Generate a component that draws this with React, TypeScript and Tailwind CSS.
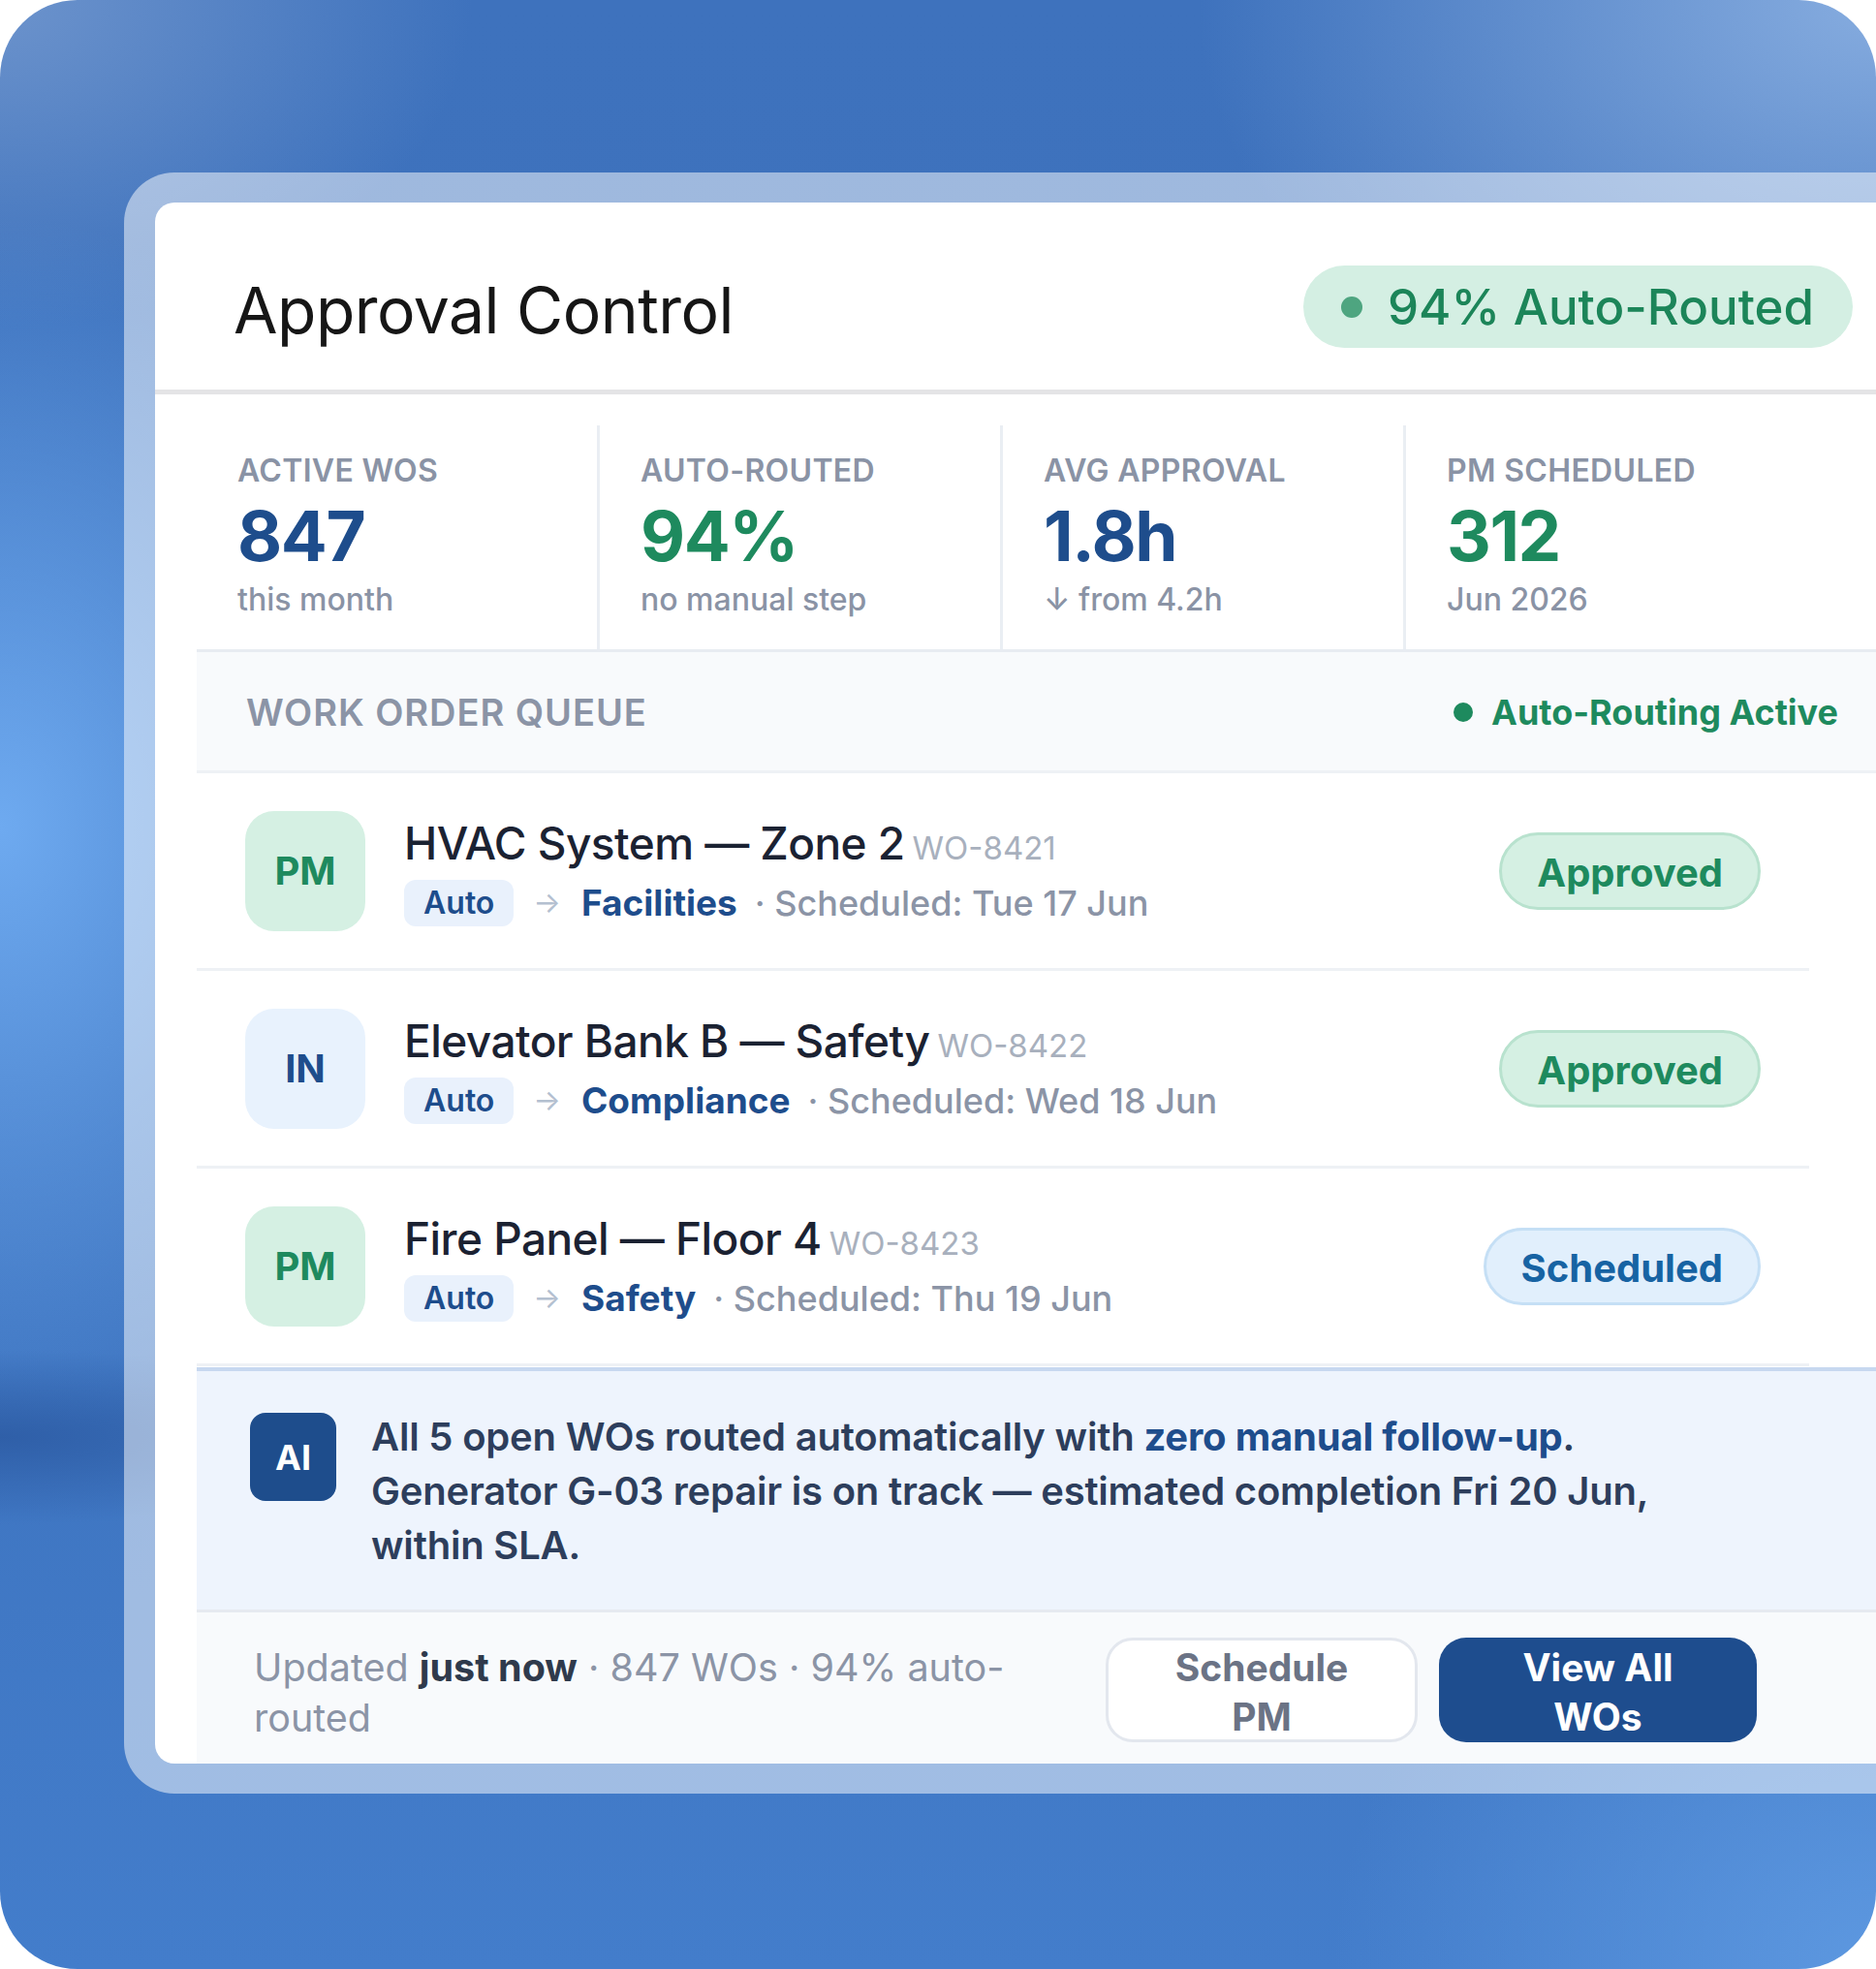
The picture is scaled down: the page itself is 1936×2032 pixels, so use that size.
import React from "react";

type Row = {
  tag: string;
  tagClass: string;
  title: string;
  wo: string;
  dept: string;
  date: string;
  status: "Approved" | "Scheduled";
};

const ROWS: Row[] = [
  {
    tag: "PM",
    tagClass: "bg-[#d5f0e3] text-[#1e8a5e]",
    title: "HVAC System — Zone 2",
    wo: "WO-8421",
    dept: "Facilities",
    date: "Tue 17 Jun",
    status: "Approved",
  },
  {
    tag: "IN",
    tagClass: "bg-[#e8f2fd] text-[#1e4d8c]",
    title: "Elevator Bank B — Safety",
    wo: "WO-8422",
    dept: "Compliance",
    date: "Wed 18 Jun",
    status: "Approved",
  },
  {
    tag: "PM",
    tagClass: "bg-[#d5f0e3] text-[#1e8a5e]",
    title: "Fire Panel — Floor 4",
    wo: "WO-8423",
    dept: "Safety",
    date: "Thu 19 Jun",
    status: "Scheduled",
  },
];

const STATS = [
  { label: "Active WOs", value: "847", sub: "this month", tone: "text-[#1e4d8c]" },
  { label: "Auto-Routed", value: "94%", sub: "no manual step", tone: "text-[#1e8a5e]" },
  { label: "Avg Approval", value: "1.8h", sub: "↓ from 4.2h", tone: "text-[#1e4d8c]" },
  { label: "PM Scheduled", value: "312", sub: "Jun 2026", tone: "text-[#1e8a5e]" },
];

function StatusPill({ status }: { status: Row["status"] }) {
  const tone =
    status === "Approved"
      ? "bg-[#d5f0e3] border-[#b8e2ce] text-[#1e8a5e]"
      : "bg-[#e1effc] border-[#c5dff5] text-[#1763a3]";
  return (
    <div className={`ml-auto flex h-[80px] items-center rounded-full border-[3px] px-[36px] pt-[4px] text-[40px] font-bold ${tone}`}>
      {status}
    </div>
  );
}

function QueueRow({ row }: { row: Row }) {
  return (
    <div className="flex h-[204px] items-center border-b-[3px] border-[#eef1f5] pl-[50px] pr-[50px]">
      <div className={`flex h-[124px] w-[124px] items-center justify-center rounded-[30px] text-[40px] font-bold ${row.tagClass}`}>
        {row.tag}
      </div>
      <div className="ml-[40px] pt-[4px]">
        <div className="flex items-baseline gap-[8px]">
          <span className="text-[46px] font-medium leading-[56px] tracking-[-0.012em] text-[#1b2232]">{row.title}</span>
          <span className="text-[33px] text-[#a8b0bd]">{row.wo}</span>
        </div>
        <div className="mt-[4px] flex items-center">
          <span className="flex h-[48px] items-center rounded-[12px] bg-[#e9f1fc] px-[20px] text-[32px] font-semibold text-[#1e4d8c]">
            Auto
          </span>
          <span className="ml-[20px] text-[30px] text-[#b4c0d0]">→</span>
          <span className="ml-[21px] text-[37px] font-bold text-[#1e4d8c]">{row.dept}</span>
          <span className="ml-[18px] text-[36px] font-medium text-[#8b94a6]">· Scheduled: {row.date}</span>
        </div>
      </div>
      <StatusPill status={row.status} />
    </div>
  );
}

export default function App() {
  return (
    <div className="min-h-screen bg-white font-['Inter',sans-serif]">
      <div className="h-[2032px] w-[1936px] overflow-hidden rounded-[80px] bg-[radial-gradient(ellipse_420px_90px_at_0%_73%,#2f5fa8_0%,transparent_100%),radial-gradient(ellipse_700px_900px_at_0%_42%,#6eaaf0_0%,transparent_70%),radial-gradient(ellipse_650px_450px_at_0%_0%,#6c93cc_0%,transparent_75%),radial-gradient(ellipse_1000px_700px_at_100%_0%,#86acdf_0%,transparent_70%),radial-gradient(ellipse_800px_700px_at_100%_100%,#5d98e0_0%,transparent_70%),linear-gradient(180deg,#3e72bd_0%,#3c71bc_55%,#437dcb_100%)] pl-[128px] pt-[178px]">
        <div className="w-[1900px] rounded-l-[52px] bg-white/50 py-[31px] pl-[32px]">
          <div className="w-[1838px] overflow-hidden rounded-l-[20px] bg-white">
            {/* header */}
            <div className="flex items-center justify-between border-b-[5px] border-[#e4e4e6] pb-[43px] pl-[81px] pr-[86px] pt-[65px]">
              <h1 className="mt-[6px] text-[66px] font-normal leading-none tracking-[-0.008em] text-[#161616]">
                Approval Control
              </h1>
              <div className="flex h-[85px] items-center gap-[26px] rounded-full bg-[#d4efe3] pl-[39px] pr-[40px]">
                <span className="h-[22px] w-[22px] rounded-full bg-[#4ea580]" />
                <span className="text-[51px] font-medium leading-none text-[#1c8559]">94% Auto-Routed</span>
              </div>
            </div>

            <div className="ml-[43px]">
              {/* stats */}
              <div className="border-b-[3px] border-[#e8ecf2] pt-[32px]">
                <div className="grid grid-cols-[repeat(4,416px)]">
                  {STATS.map((s, i) => (
                    <div
                      key={s.label}
                      className={`pb-[32px] pl-[42px] pt-[28px] ${i < 3 ? "border-r-[3px] border-[#eaeef3]" : ""}`}
                    >
                      <div className="text-[32px] font-semibold uppercase leading-[38px] tracking-[0.01em] text-[#8a93a5]">
                        {s.label}
                      </div>
                      <div className={`mt-[13px] text-[71px] font-bold leading-none tracking-[-0.02em] ${s.tone}`}>
                        {s.value}
                      </div>
                      <div className="mt-[11px] text-[32px] font-medium leading-[38px] text-[#8a93a5]">{s.sub}</div>
                    </div>
                  ))}
                </div>
              </div>

              {/* queue header */}
              <div className="flex h-[125px] items-center justify-between border-b-[3px] border-[#eef1f5] bg-[#f8fafc] pl-[51px] pr-[101px] pt-[2px]">
                <span className="text-[38px] font-semibold tracking-[0.025em] text-[#8b94a6]">WORK ORDER QUEUE</span>
                <span className="flex items-center gap-[19px]">
                  <span className="h-[20px] w-[20px] rounded-full bg-[#1e8a5e]" />
                  <span className="text-[36px] font-bold text-[#1e8a5e]">Auto-Routing Active</span>
                </span>
              </div>

              {/* rows */}
              <div className="w-[1664px]">
                {ROWS.map((r) => (
                  <QueueRow key={r.wo} row={r} />
                ))}
              </div>

              {/* AI summary */}
              <div className="mt-[1px] flex items-start border-b-[3px] border-t-[4px] border-b-[#e6eaf0] border-t-[#c7d8f0] bg-[#eef4fd] pb-[38px] pl-[55px] pt-[40px]">
                <div className="mt-[3px] flex h-[91px] w-[89px] shrink-0 items-center justify-center rounded-[16px] bg-[#1e4d8c] text-[36px] font-bold text-white">
                  AI
                </div>
                <p className="ml-[36px] w-[1400px] text-[40px] font-semibold leading-[56px] tracking-[-0.005em] text-[#2d3e5c]">
                  All 5 open WOs routed automatically with{" "}
                  <span className="font-bold text-[#1e4d8c]">zero manual follow-up</span>. Generator G-03 repair is on
                  track — estimated completion Fri 20 Jun, within SLA.
                </p>
              </div>

              {/* footer */}
              <div className="flex h-[156px] items-center bg-[#f8fafc] pl-[59px] pt-[4px]">
                <p className="mt-[6px] w-[820px] text-[39.5px] leading-[52px] text-[#8b94a6]">
                  Updated <span className="font-bold text-[#2f3a4c]">just now</span> · 847 WOs · 94% auto-routed
                </p>
                <button className="ml-[59px] flex h-[108px] w-[322px] items-center justify-center rounded-[28px] border-[3px] border-[#e3e7ee] bg-white pt-[4px] text-center text-[39px] font-bold leading-[51px] text-[#6b7385]">
                  <span className="max-w-[200px]">Schedule PM</span>
                </button>
                <button className="ml-[22px] flex h-[108px] w-[328px] items-center justify-center rounded-[28px] bg-[#1e4d8e] pt-[4px] text-center text-[39px] font-bold leading-[51px] text-white">
                  <span className="max-w-[200px]">View All WOs</span>
                </button>
              </div>
            </div>
          </div>
        </div>
      </div>
    </div>
  );
}
